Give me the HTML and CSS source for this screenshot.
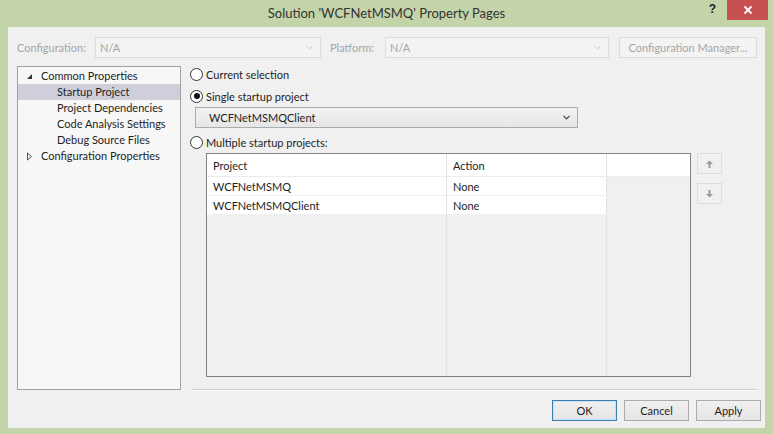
FILE: index.html
```html
<!DOCTYPE html>
<html lang="en">
<head>
    <meta charset="UTF-8">
    <title>Solution 'WCFNetMSMQ' Property Pages</title>
    <link rel="stylesheet" href="styles.css">
</head>
<body>
    <div class="window">
        <div class="titlebar">
            <div></div>
            <div class="title">Solution 'WCFNetMSMQ' Property Pages</div>
            <div class="caption-buttons">
                <span class="help">?</span>
                <span class="close">
                    <svg width="10" height="10" viewBox="0 0 10 10"><path d="M1.5 1.5 L8.5 8.5 M8.5 1.5 L1.5 8.5" stroke="#fff" stroke-width="1.8"/></svg>
                </span>
            </div>
        </div>

        <div class="client">
            <div class="toolbar">
                <span class="label label-config">Configuration:</span>
                <div class="combo disabled combo-config">
                    <span>N/A</span>
                    <svg class="chev" width="7" height="5" viewBox="0 0 7 5"><path d="M0.5 0.8 L3.5 3.8 L6.5 0.8" fill="none" stroke="#c4c4c4" stroke-width="1"/></svg>
                </div>
                <span class="label label-platform">Platform:</span>
                <div class="combo disabled combo-platform">
                    <span>N/A</span>
                    <svg class="chev" width="7" height="5" viewBox="0 0 7 5"><path d="M0.5 0.8 L3.5 3.8 L6.5 0.8" fill="none" stroke="#c4c4c4" stroke-width="1"/></svg>
                </div>
                <div class="btn disabled config-manager">Configuration Manager...</div>
            </div>

            <div class="main">
                <div class="tree">
                    <div class="node parent">
                        <svg class="twisty" width="7" height="7" viewBox="0 0 7 7"><path d="M6 1 L6 6 L1 6 Z" fill="#333"/></svg>
                        Common Properties
                    </div>
                    <div class="node child selected">Startup Project</div>
                    <div class="node child">Project Dependencies</div>
                    <div class="node child">Code Analysis Settings</div>
                    <div class="node child">Debug Source Files</div>
                    <div class="node parent">
                        <svg class="twisty" width="7" height="9" viewBox="0 0 7 9"><path d="M1.5 1 L5.5 4.5 L1.5 8 Z" fill="none" stroke="#555" stroke-width="1"/></svg>
                        Configuration Properties
                    </div>
                </div>

                <div class="page">
                    <label class="radio-row"><span class="radio"></span>Current selection</label>
                    <label class="radio-row"><span class="radio checked"></span>Single startup project</label>
                    <div class="combo project-combo">
                        <span>WCFNetMSMQClient</span>
                        <svg class="chev" width="7" height="5" viewBox="0 0 7 5"><path d="M0.5 0.8 L3.5 3.8 L6.5 0.8" fill="none" stroke="#444" stroke-width="1.2"/></svg>
                    </div>
                    <label class="radio-row"><span class="radio"></span>Multiple startup projects:</label>

                    <div class="multi">
                        <div class="grid-box">
                            <table class="grid">
                                <tr class="head">
                                    <td class="c1">Project</td>
                                    <td class="c2">Action</td>
                                    <td class="c3"></td>
                                </tr>
                                <tr class="row">
                                    <td class="c1">WCFNetMSMQ</td>
                                    <td class="c2">None</td>
                                    <td class="c3"></td>
                                </tr>
                                <tr class="row">
                                    <td class="c1">WCFNetMSMQClient</td>
                                    <td class="c2">None</td>
                                    <td class="c3"></td>
                                </tr>
                                <tr class="filler">
                                    <td class="c1"></td>
                                    <td class="c2"></td>
                                    <td class="c3"></td>
                                </tr>
                            </table>
                        </div>
                        <div class="move-buttons">
                            <div class="move-btn">
                                <svg width="7" height="8" viewBox="0 0 7 8"><path d="M3.5 0.5 L7 4 L4.5 4 L4.5 8 L2.5 8 L2.5 4 L0 4 Z" fill="#9a9a9a"/></svg>
                            </div>
                            <div class="move-btn">
                                <svg width="7" height="8" viewBox="0 0 7 8"><path d="M3.5 7.5 L7 4 L4.5 4 L4.5 0 L2.5 0 L2.5 4 L0 4 Z" fill="#9a9a9a"/></svg>
                            </div>
                        </div>
                    </div>
                </div>
            </div>

            <div class="separator"></div>

            <div class="footer">
                <div class="btn default">OK</div>
                <div class="btn">Cancel</div>
                <div class="btn">Apply</div>
            </div>
        </div>
    </div>
</body>
</html>
```

FILE: styles.css
```css
body {
    margin: 0;
    background-color: #c3d4a9;
    font-family: Lato, "Liberation Sans", sans-serif;
    font-size: 11px;
    color: #1e1e1e;
}

.window {
    width: 773px;
    height: 434px;
    padding: 0 8px 6px 8px;
    box-sizing: border-box;
    display: flex;
    flex-direction: column;
}

.titlebar {
    height: 27px;
    margin: 0 -8px;
    display: grid;
    grid-template-columns: 1fr auto 1fr;
    align-items: start;
}

.title {
    font-size: 13px;
    color: #333;
    line-height: 27px;
}

.caption-buttons {
    display: flex;
    justify-content: flex-end;
    align-items: flex-start;
    padding-right: 5px;
}

.help {
    font-family: "Liberation Sans", sans-serif;
    font-weight: bold;
    font-size: 12px;
    color: #222;
    margin-top: 2px;
    margin-right: 11px;
}

.close {
    width: 41px;
    height: 20px;
    background-color: #c75050;
    display: flex;
    align-items: center;
    justify-content: center;
}

.client {
    flex: 1;
    background-color: #f0f0f0;
    padding: 10px 8px 0 9px;
    display: flex;
    flex-direction: column;
}

.toolbar {
    display: flex;
    align-items: center;
    height: 21px;
}

.label {
    color: #a6a6a6;
}

.label-config {
    width: 78px;
}

.label-platform {
    width: 55px;
    margin-left: 9px;
}

.combo {
    height: 21px;
    box-sizing: border-box;
    border: 1px solid #acacac;
    background: linear-gradient(#f2f2f2, #e6e6e6);
    display: flex;
    align-items: center;
    justify-content: space-between;
    padding: 0 7px 0 4px;
}

.combo.disabled {
    border-color: #dcdcdc;
    background: #f3f3f3;
    color: #a6a6a6;
}

.combo-config {
    width: 226px;
}

.combo-platform {
    width: 224px;
}

.btn {
    height: 21px;
    box-sizing: border-box;
    border: 1px solid #acacac;
    background: linear-gradient(#f0f0f0, #e5e5e5);
    display: flex;
    align-items: center;
    justify-content: center;
}

.btn.disabled {
    border-color: #dcdcdc;
    background: #f3f3f3;
    color: #a6a6a6;
}

.config-manager {
    width: 138px;
    margin-left: 10px;
}

.main {
    display: flex;
    margin-top: 8px;
    height: 324px;
}

.tree {
    width: 164px;
    box-sizing: border-box;
    border: 1px solid #a0a0a0;
    background-color: #f7f7f7;
    padding-top: 1px;
}

.node {
    height: 16px;
    line-height: 16px;
    display: flex;
    align-items: center;
    white-space: nowrap;
}

.node.parent {
    padding-left: 8px;
}

.twisty {
    width: 7px;
    margin-right: 8px;
}

.node.child {
    padding-left: 39px;
}

.node.selected {
    background-color: #cfcfdc;
}

.page {
    flex: 1;
    padding: 0 0 0 9px;
    display: flex;
    flex-direction: column;
}

.radio-row {
    display: flex;
    align-items: center;
    height: 14px;
    margin-top: 1px;
    margin-bottom: 7px;
}

.radio {
    width: 11px;
    height: 11px;
    border: 1px solid #333;
    border-radius: 50%;
    background-color: #fff;
    margin-right: 3px;
    display: flex;
    align-items: center;
    justify-content: center;
}

.radio.checked::after {
    content: "";
    width: 6px;
    height: 6px;
    border-radius: 50%;
    background-color: #111;
}

.project-combo {
    width: 383px;
    margin-left: 5px;
    margin-top: -3px;
    margin-bottom: 6px;
    padding-left: 13px;
}

.multi {
    display: flex;
    margin-left: 16px;
    margin-top: -3px;
    height: 224px;
}

.grid-box {
    width: 485px;
    box-sizing: border-box;
    border: 1px solid #828282;
}

.grid {
    width: 100%;
    height: 100%;
    border-collapse: collapse;
}

.grid td {
    padding: 0 0 0 6px;
    border-right: 1px solid #e2e2e2;
}

.grid .c1 {
    width: 233px;
}

.grid .c2 {
    width: 153px;
}

.grid .c3 {
    border-right: none;
}

.grid .head td {
    height: 22px;
    background-color: #fff;
    border-bottom: 1px solid #ececec;
}

.grid .row td {
    height: 18px;
    background-color: #fff;
    border-bottom: 1px solid #f0f0f0;
}

.grid .row .c3 {
    background-color: #f0f0f0;
}

.grid .filler td {
    background-color: #f0f0f0;
}

.move-buttons {
    margin-left: 6px;
    display: flex;
    flex-direction: column;
    gap: 9px;
}

.move-btn {
    width: 25px;
    height: 21px;
    box-sizing: border-box;
    border: 1px solid #dcdcdc;
    background-color: #f0f0f0;
    display: flex;
    align-items: center;
    justify-content: center;
}

.separator {
    height: 1px;
    margin-left: 174px;
    margin-top: -1px;
    background-color: #c8c8c8;
    border-bottom: 1px solid #fff;
}

.footer {
    display: flex;
    justify-content: flex-end;
    gap: 7px;
    margin-top: 9px;
    margin-right: -4px;
}

.footer .btn {
    width: 65px;
    height: 21px;
}

.footer .btn.default {
    border-color: #3c7fb1;
    box-shadow: inset 0 0 0 1px #c9e0f5;
}
```
